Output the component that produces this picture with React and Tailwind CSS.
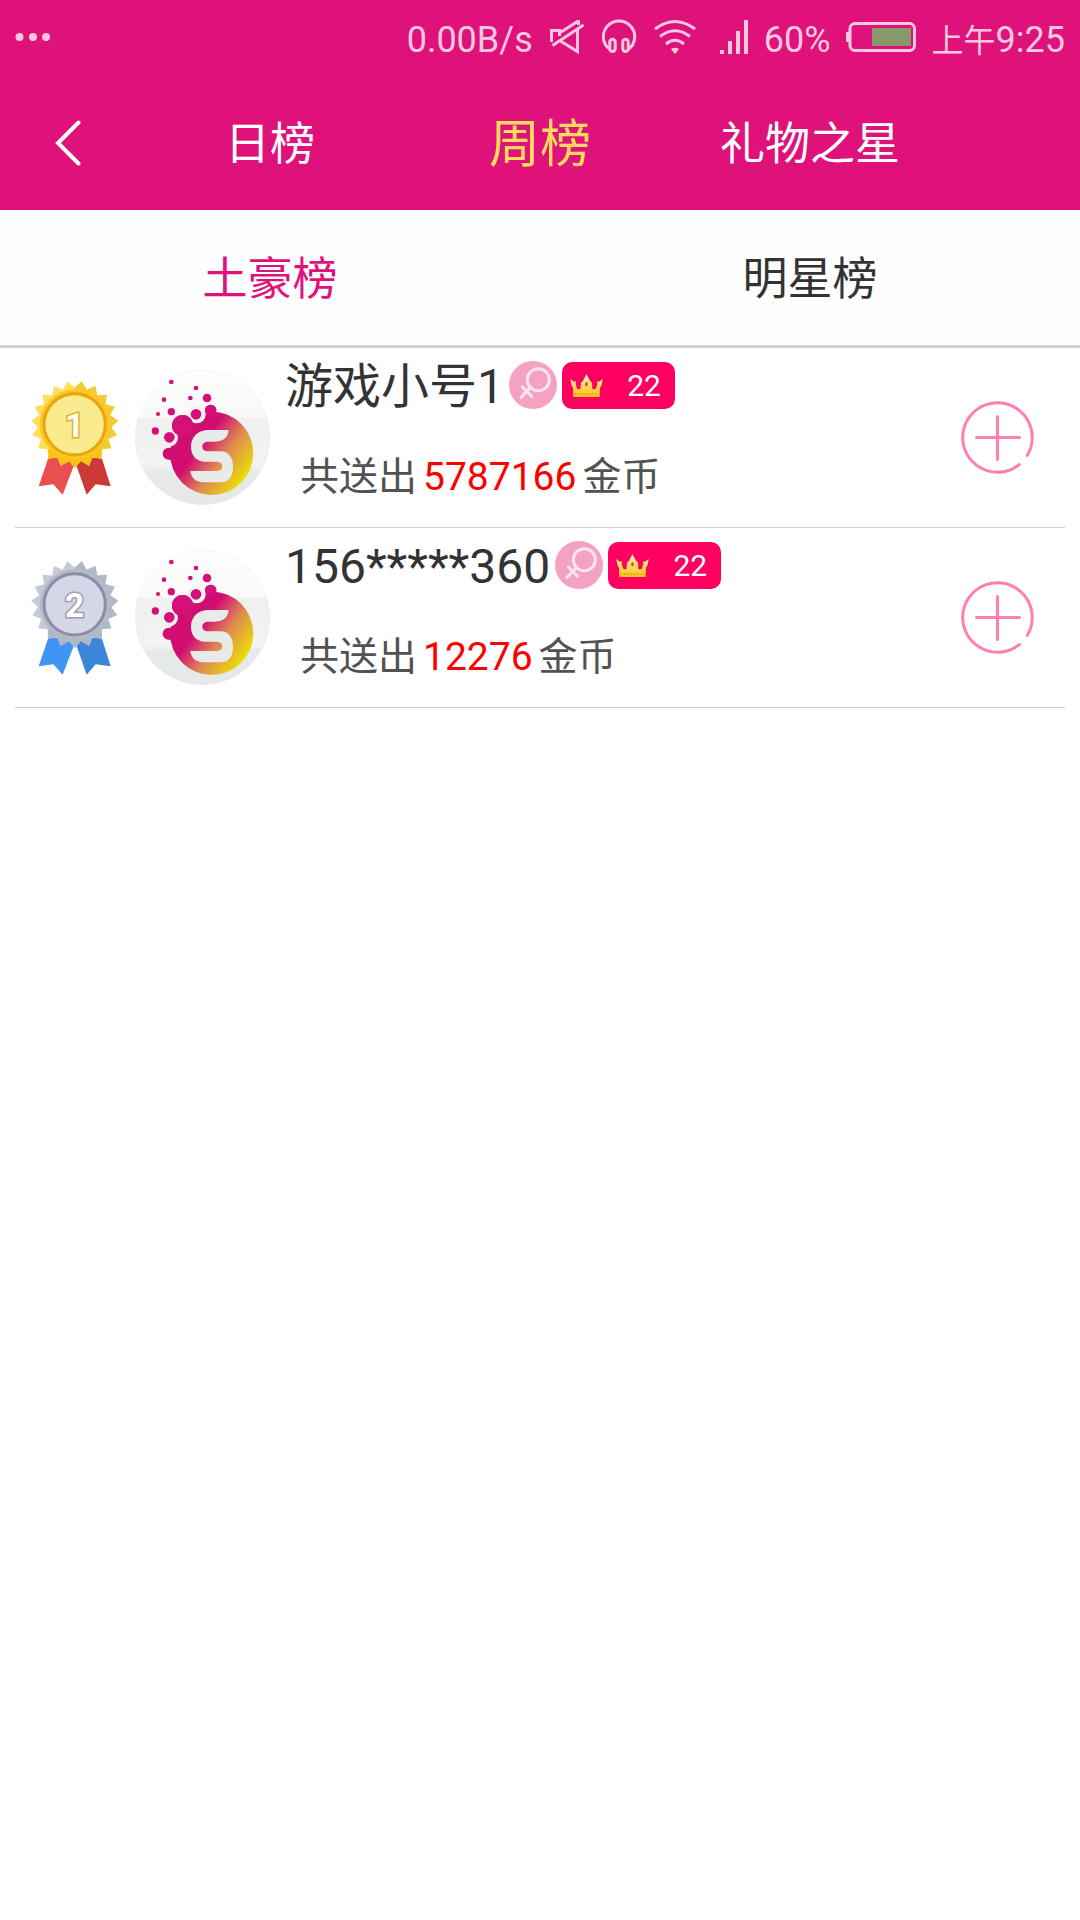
import { useState } from 'react'

const ranking = [
  { id: 1, name: '游戏小号1', coins: 5787166, level: 22 },
  { id: 2, name: '156*****360', coins: 12276, level: 22 },
]

const periods = ['日榜', '周榜', '礼物之星']
const boards = ['土豪榜', '明星榜']

const medals = {
  1: {
    light: '#ffdf5c',
    dark: '#f2cc35',
    low: '#fcc010',
    rim: '#fbc826',
    ring: '#e8a510',
    face: '#faeb8c',
    outline: '#e8ab2c',
    ribbonLeft: '#e94f50',
    ribbonRight: '#cd3838',
  },
  2: {
    light: '#c5cad8',
    dark: '#b1b8c8',
    low: '#b0b7c6',
    rim: '#b5bac9',
    ring: '#8e8ca8',
    face: '#d6d7e6',
    outline: '#9c9ab4',
    ribbonLeft: '#4094f4',
    ribbonRight: '#3c86da',
  },
}

const spikes = 19

// Points of the serrated edge, starting from the tip at the bottom
function starPoints(cx, cy) {
  const points = []
  for (let i = 0; i < spikes * 2; i++) {
    const angle = (Math.PI * i) / spikes
    const r = i % 2 === 0 ? 131 : 110
    points.push(`${(cx + r * Math.sin(angle)).toFixed(1)},${(cy + r * Math.cos(angle)).toFixed(1)}`)
  }
  return points.join(' ')
}

function Medal({ rank }) {
  const c = medals[rank]
  const points = starPoints(224, 222)
  return (
    <svg viewBox="93 92 264 342" className="w-[88px] h-[114px] shrink-0" role="img" aria-label={`第${rank}名`}>
      <defs>
        <clipPath id={`right-${rank}`}>
          <rect x="224" y="90" width="140" height="270" />
        </clipPath>
        <clipPath id={`low-${rank}`}>
          <rect x="145" y="296" width="160" height="62" />
        </clipPath>
      </defs>
      <polygon points="145,322 222,322 222,345 188,433 160,402 116,408" fill={c.ribbonLeft} />
      <polygon points="305,322 229,322 229,345 260,433 287,402 332,408" fill={c.ribbonRight} />
      <polygon points="145,290 305,290 305,326 278,321 268,346 243,333 225,352 208,333 183,346 172,321 145,326" fill={c.low} />
      <polygon points={points} fill={c.light} />
      <polygon points={points} fill={c.dark} clipPath={`url(#right-${rank})`} />
      <polygon points={points} fill={c.low} clipPath={`url(#low-${rank})`} />
      <circle cx="224" cy="222" r="105" fill={c.rim} />
      <circle cx="224" cy="222" r="92" fill={c.face} stroke={c.ring} strokeWidth="9" />
      <text
        x="224"
        y="259"
        textAnchor="middle"
        fontSize="100"
        fontWeight="700"
        fill="#fff"
        stroke={c.outline}
        strokeWidth="9"
        paintOrder="stroke"
        className="font-['Roboto',sans-serif]"
      >
        {rank}
      </text>
    </svg>
  )
}

function Avatar({ id }) {
  return (
    <svg viewBox="405 60 405 405" className="size-[135px] shrink-0 rounded-full" aria-hidden="true">
      <defs>
        <linearGradient id={`ball-${id}`} gradientUnits="userSpaceOnUse" x1="545" y1="245" x2="735" y2="385">
          <stop offset="0" stopColor="#d20d72" />
          <stop offset="0.3" stopColor="#d20d72" />
          <stop offset="0.62" stopColor="#de8a52" />
          <stop offset="1" stopColor="#ecdf04" />
        </linearGradient>
        <linearGradient id={`paper-${id}`} x1="0" y1="0" x2="0" y2="1">
          <stop offset="0" stopColor="#fcfefc" />
          <stop offset="0.35" stopColor="#f8f9f8" />
          <stop offset="0.36" stopColor="#eef1ef" />
          <stop offset="0.7" stopColor="#f2f3f2" />
          <stop offset="0.76" stopColor="#e6ebe8" />
          <stop offset="1" stopColor="#e7e7e7" />
        </linearGradient>
      </defs>
      <circle cx="607" cy="262" r="202" fill={`url(#paper-${id})`} stroke="#e6e6e6" strokeWidth="2" />
      <g fill={`url(#ball-${id})`}>
        <circle cx="635" cy="310" r="125" />
        <circle cx="548" cy="227" r="32" />
        <circle cx="632" cy="181" r="17" />
        <circle cx="506" cy="311" r="18" />
        <polygon points="572,206 640,181 655,190 640,280 560,290 515,330 506,328 522,290 530,250" />
      </g>
      <circle cx="590" cy="193" r="27" fill="#f3f5f3" />
      <circle cx="507" cy="263" r="27" fill="#eef0ee" />
      <g fill="#d60f79">
        <circle cx="548" cy="227" r="32" />
        <circle cx="632" cy="181" r="17" />
        <circle cx="588" cy="193" r="16" />
        <circle cx="508" cy="262" r="16" />
        <circle cx="514" cy="185" r="11" />
        <circle cx="621" cy="144" r="13" />
        <circle cx="571" cy="144" r="7" />
        <circle cx="588" cy="114" r="7" />
        <circle cx="514" cy="96" r="7" />
        <circle cx="492" cy="149" r="7" />
        <circle cx="474" cy="192" r="6" />
        <circle cx="466" cy="243" r="11" />
      </g>
      <path
        d="M686 240H622C592 241 573 262 573 290C573 318 590 334 615 335H650C662 336 667 342 667 349C667 358 660 363 650 363H571C573 385 590 397 612 397H662C688 396 699 378 699 350C699 322 685 304 662 304H625C612 304 607 297 607 290C607 281 614 275 625 275H645C670 274 685 262 686 240Z"
        fill="#e8ebe9"
      />
    </svg>
  )
}

function GenderIcon() {
  return (
    <svg viewBox="0 0 144 144" className="size-12 shrink-0" fill="none" role="img" aria-label="女">
      <circle cx="72" cy="72" r="72" fill="#f4a1c2" />
      <g stroke="#fce4ee" strokeWidth="9" strokeLinecap="round">
        <circle cx="88" cy="56" r="33" />
        <path d="M64 80L36 109M40 78L68 106" />
      </g>
    </svg>
  )
}

function CrownIcon() {
  return (
    <svg viewBox="0 0 99 69" className="w-[33px] h-[23px]" aria-hidden="true">
      <defs>
        <linearGradient id="crown" x1="0" y1="0" x2="0" y2="1">
          <stop offset="0" stopColor="#fff3d0" />
          <stop offset="0.5" stopColor="#fbdc5c" />
          <stop offset="1" stopColor="#fdc21c" />
        </linearGradient>
      </defs>
      <path
        d="M10 69L9 42L4 32L1 15L12 23L18 22L17 31L22 45L31 46L33 26L39 20L45 9L49 0L54 9L60 20L66 26L67 46L77 45L82 31L81 22L87 23L98 15L95 32L90 42L89 69Z"
        fill="url(#crown)"
      />
      <path d="M46 36V28L49 23L53 28V36Z" fill="#e0404a" />
      <path d="M14 60H86" stroke="#d9902a" strokeWidth="4" strokeDasharray="5 5" />
    </svg>
  )
}

function FollowIcon() {
  return (
    <svg viewBox="0 0 73 73" className="size-[73px]" fill="none" stroke="#ff80b0" strokeWidth="3" strokeLinecap="round" aria-hidden="true">
      <path d="M58.4 63.5A34.8 34.8 0 1 1 66.3 54.4" />
      <path d="M15.5 36.5H58.5M36.5 15.5V58.5" />
    </svg>
  )
}

function StatusBar() {
  return (
    <div className="flex h-[72px] items-center justify-between px-[15px] pt-2 text-[36px] leading-[40px] text-[#f9c8df]">
      <svg viewBox="0 0 36 34" className="mb-1 w-9 h-[34px]" fill="currentColor" aria-hidden="true">
        <circle cx="4.5" cy="16" r="4" />
        <circle cx="18" cy="16" r="4" />
        <circle cx="31" cy="16" r="4" />
      </svg>
      <div className="flex items-center">
        <span>0.00B/s</span>
        <svg viewBox="0 0 36 36" className="ml-[17px] mb-1.5 size-9" fill="none" stroke="currentColor" strokeWidth="3" aria-hidden="true">
          <path d="M1.5 23V11.5H9.5V17M9.5 14L27.5 2.5H28.5V6M9.5 21.5L27.5 32.5V11M2.5 26.5L33.5 6" />
        </svg>
        <svg viewBox="0 0 36 36" className="ml-4 mb-1.5 size-9" fill="none" stroke="currentColor" strokeWidth="3" aria-hidden="true">
          <path d="M8 30.5A15.7 15.7 0 1 1 26 30.5" />
          <rect x="7.8" y="20.2" width="5.4" height="12.3" rx="2.7" />
          <rect x="20.8" y="20.2" width="5.4" height="12.3" rx="2.7" />
        </svg>
        <svg viewBox="0 0 42 36" className="ml-4 mb-1.5 w-[42px] h-9" fill="none" stroke="currentColor" strokeWidth="3" aria-hidden="true">
          <path d="M1 10Q21 -5 41 10M6 17.5Q21 6 36 17.5M12 25Q21 17.5 30 25" />
          <path d="M17 30Q21 27.5 25 30L21 35Z" fill="currentColor" stroke="none" />
        </svg>
        <svg viewBox="0 0 28 34" className="ml-6 mb-1.5 w-7 h-[34px]" fill="currentColor" aria-hidden="true">
          <path d="M0 30H4V34H0ZM8 21H12V34H8ZM16 11H20V34H16ZM24 0H28V34H24Z" />
        </svg>
        <span className="ml-4">60%</span>
        <svg viewBox="0 0 70 30" className="ml-[15px] mb-1.5 w-[70px] h-[30px]" aria-hidden="true">
          <rect x="0" y="10" width="4" height="10" fill="currentColor" />
          <rect x="4" y="1.5" width="64.5" height="27" rx="5" fill="none" stroke="currentColor" strokeWidth="3" />
          <rect x="26" y="6" width="39" height="18" fill="#859a68" />
        </svg>
        <span className="ml-4">
          <span className="text-[32px]">上午</span>9:25
        </span>
      </div>
    </div>
  )
}

function RankRow({ rank, user }) {
  return (
    <li className="mx-[15px] flex h-[180px] items-center border-b border-[#cfcfcf] pl-4 pr-[31px]">
      <Medal rank={rank} />
      <div className="ml-4 flex">
        <Avatar id={user.id} />
      </div>
      <div className="ml-[15px] flex flex-1 flex-col gap-8 self-start pt-1">
        <div className="flex h-[66px] items-center gap-[5px]">
          <span className="pt-1 text-[48px] leading-[66px] text-[#333]">{user.name}</span>
          <GenderIcon />
          <span className="flex h-[47px] w-[113px] items-center justify-between rounded-[10px] bg-[#ff0060] pl-2 pr-[14px] text-[30px] leading-[47px] text-white">
            <CrownIcon />
            {user.level}
          </span>
        </div>
        <p className="flex gap-[6px] pl-[15px] text-[39px] leading-[54px] text-[#525252]">
          <span>共送出</span>
          <span className="text-[#fe0000]">{user.coins}</span>
          <span>金币</span>
        </p>
      </div>
      <button type="button" aria-label={`关注 ${user.name}`}>
        <FollowIcon />
      </button>
    </li>
  )
}

export default function App() {
  const [period, setPeriod] = useState('周榜')
  const [board, setBoard] = useState('土豪榜')

  return (
    <div className="min-h-screen bg-white font-['Roboto','Noto_Sans_CJK_SC',sans-serif]">
      <header className="bg-[#de127a]">
        <StatusBar />
        <nav className="grid h-[138px] grid-cols-8 items-center">
          <button type="button" aria-label="返回" className="justify-self-center pt-1">
            <svg viewBox="0 0 26 46" className="w-[26px] h-[46px]" fill="none" stroke="#fff" strokeWidth="4" strokeLinecap="round" aria-hidden="true">
              <path d="M23.5 2.5L3 23L23.5 43.5" />
            </svg>
          </button>
          {periods.map((item) => (
            <button
              key={item}
              type="button"
              onClick={() => setPeriod(item)}
              className={`col-span-2 pt-2 whitespace-nowrap ${item === period ? 'text-[51px] text-[#ffda5e]' : 'text-[45px] text-white'}`}
            >
              {item}
            </button>
          ))}
        </nav>
      </header>

      <div className="grid grid-cols-2 border-b-[3px] border-[#cfcfcf] bg-[#fefefe]">
        {boards.map((item) => (
          <button
            key={item}
            type="button"
            onClick={() => setBoard(item)}
            className={`h-[135px] pt-1 text-[45px] ${item === board ? 'text-[#de127a]' : 'text-[#333]'}`}
          >
            {item}
          </button>
        ))}
      </div>

      <ul>
        {ranking.map((user, i) => (
          <RankRow key={user.id} rank={i + 1} user={user} />
        ))}
      </ul>
    </div>
  )
}
